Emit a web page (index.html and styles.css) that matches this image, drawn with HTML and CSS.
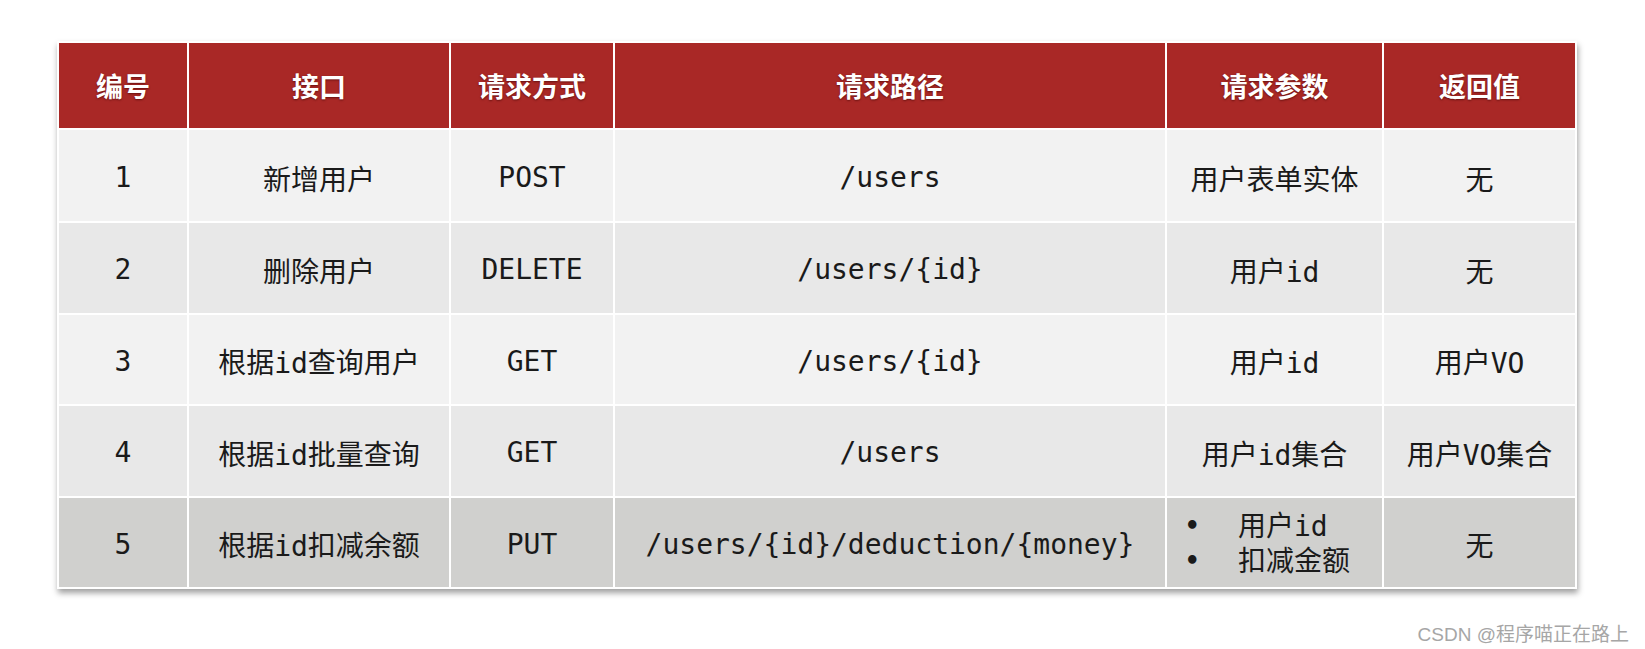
FILE: index.html
```html
<!DOCTYPE html>
<html lang="zh">
<head>
<meta charset="utf-8">
<title>用户接口</title>
<link rel="stylesheet" href="styles.css">
</head>
<body>
<main class="page">
  <table class="api">
    <thead>
      <tr>
        <th class="c1">编号</th>
        <th class="c2">接口</th>
        <th class="c3">请求方式</th>
        <th class="c4">请求路径</th>
        <th class="c5">请求参数</th>
        <th class="c6">返回值</th>
      </tr>
    </thead>
    <tbody>
      <tr class="r1 light">
        <td>1</td><td>新增用户</td><td>POST</td><td>/users</td><td>用户表单实体</td><td>无</td>
      </tr>
      <tr class="mid">
        <td>2</td><td>删除用户</td><td>DELETE</td><td>/users/{id}</td><td>用户id</td><td>无</td>
      </tr>
      <tr class="light">
        <td>3</td><td>根据id查询用户</td><td>GET</td><td>/users/{id}</td><td>用户id</td><td>用户VO</td>
      </tr>
      <tr class="mid">
        <td>4</td><td>根据id批量查询</td><td>GET</td><td>/users</td><td>用户id集合</td><td>用户VO集合</td>
      </tr>
      <tr class="dark">
        <td>5</td><td>根据id扣减余额</td><td>PUT</td><td>/users/{id}/deduction/{money}</td>
        <td class="params">
          <ul class="bullets">
            <li><span class="dot">•</span><span>用户id</span></li>
            <li><span class="dot">•</span><span>扣减金额</span></li>
          </ul>
        </td>
        <td>无</td>
      </tr>
    </tbody>
  </table>
  <footer class="mark">CSDN @程序喵正在路上</footer>
</main>
</body>
</html>
```

FILE: styles.css
```css
html, body {
  margin: 0;
  padding: 0;
  background: #ffffff;
}

.page {
  width: 1645px;
  height: 649px;
  padding: 41px 0 0 57px;
  box-sizing: border-box;
  display: flex;
  flex-direction: column;
}

.api {
  width: 1520px;
  border-collapse: separate;
  border-spacing: 2px;
  background: #ffffff;
  box-shadow: 1px 4px 6px rgba(0, 0, 0, 0.38);
  table-layout: fixed;
  font-family: "DejaVu Sans Mono", "Noto Sans CJK SC", monospace;
  font-size: 28px;
  color: #1a1a1a;
}

.api th {
  height: 85px;
  padding: 0;
  background: #a92826;
  color: #ffffff;
  font-family: "Noto Sans CJK SC", sans-serif;
  font-weight: 700;
  font-size: 27px;
  text-align: center;
  vertical-align: middle;
  text-shadow: 0 1px 2px rgba(60, 0, 0, 0.6);
}

.c1 { width: 128px; }
.c2 { width: 260px; }
.c3 { width: 162px; }
.c4 { width: 550px; }
.c5 { width: 215px; }
.c6 { width: 191px; }

.api td {
  height: 89.5px;
  padding: 4px 0 0 0;
  box-sizing: border-box;
  text-align: center;
  vertical-align: middle;
  white-space: nowrap;
}

.api tr.r1 td {
  height: 91px;
}

.light td { background: #f2f2f2; }
.mid td { background: #e8e8e8; }
.dark td { background: #d0d0ce; }

.api td.params {
  text-align: left;
}

.bullets {
  list-style: none;
  margin: 0;
  padding: 0 0 0 18px;
  line-height: 35px;
}

.bullets li {
  display: flex;
  align-items: center;
}

.dot {
  width: 53px;
  font-size: 24px;
  font-weight: 700;
}

.mark {
  margin-top: 30px;
  align-self: flex-end;
  margin-right: 16px;
  font-family: "Liberation Sans", "Noto Sans CJK SC", sans-serif;
  font-size: 19px;
  color: #a6a6a6;
}
```
